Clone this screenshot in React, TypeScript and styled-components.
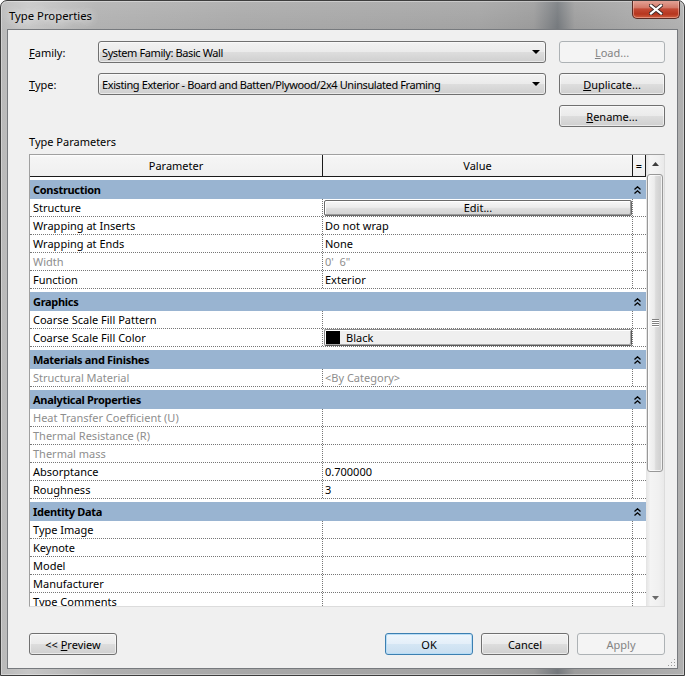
import styled, { createGlobalStyle, css } from 'styled-components'

type PropRowData = {
  label: string
  value?: string
  muted?: boolean
  kind?: 'edit' | 'color'
}

type PropGroup = {
  name: string
  rows: PropRowData[]
}

const GROUPS: PropGroup[] = [
  {
    name: 'Construction',
    rows: [
      { label: 'Structure', kind: 'edit', value: 'Edit...' },
      { label: 'Wrapping at Inserts', value: 'Do not wrap' },
      { label: 'Wrapping at Ends', value: 'None' },
      { label: 'Width', value: "0'  6\"", muted: true },
      { label: 'Function', value: 'Exterior' },
    ],
  },
  {
    name: 'Graphics',
    rows: [
      { label: 'Coarse Scale Fill Pattern' },
      { label: 'Coarse Scale Fill Color', kind: 'color', value: 'Black' },
    ],
  },
  {
    name: 'Materials and Finishes',
    rows: [{ label: 'Structural Material', value: '<By Category>', muted: true }],
  },
  {
    name: 'Analytical Properties',
    rows: [
      { label: 'Heat Transfer Coefficient (U)', muted: true },
      { label: 'Thermal Resistance (R)', muted: true },
      { label: 'Thermal mass', muted: true },
      { label: 'Absorptance', value: '0.700000' },
      { label: 'Roughness', value: '3' },
    ],
  },
  {
    name: 'Identity Data',
    rows: [
      { label: 'Type Image' },
      { label: 'Keynote' },
      { label: 'Model' },
      { label: 'Manufacturer' },
      { label: 'Type Comments' },
    ],
  },
]

const GlobalStyle = createGlobalStyle`
  html, body {
    margin: 0;
    padding: 0;
    background: #ffffff;
  }
  body {
    font-family: 'Noto Sans', 'Open Sans', sans-serif;
    font-size: 11px;
    color: #000;
  }
  * {
    box-sizing: border-box;
  }
`

const COLS = '293px 310px 13px'

const winButtonBg = css`
  border: 1px solid #707070;
  border-radius: 3px;
  background: linear-gradient(#f2f2f2 0%, #ebebeb 48%, #dddddd 52%, #cfcfcf 100%);
  box-shadow: inset 0 0 0 1px rgba(255, 255, 255, 0.55);
`

const Window = styled.div`
  position: relative;
  width: 685px;
  height: 676px;
  border: 1px solid #3d3d3d;
  border-radius: 7px 7px 0 0;
  padding: 0 6px 6px;
  display: flex;
  flex-direction: column;
  overflow: hidden;
  background:
    linear-gradient(to bottom, rgba(255, 255, 255, 0.12), rgba(255, 255, 255, 0) 30px),
    linear-gradient(
      to right,
      #b9b9b9 0%,
      #c6c6c6 4%,
      #b0b0b0 14%,
      #a8a8a8 35%,
      #a2a2a2 70%,
      #9a9a9a 78%,
      #74787c 81.5%,
      #9c9c9c 84%,
      #a6a6a6 92%,
      #b0b0b0 100%
    );
  box-shadow: inset 0 0 0 1px rgba(255, 255, 255, 0.35);
`

const TitleBar = styled.div`
  height: 28px;
  display: flex;
  align-items: flex-start;
  justify-content: space-between;
  padding-left: 2px;
`

const TitleText = styled.span`
  line-height: 30px;
  font-size: 11.3px;
  color: #000;
  text-shadow: 0 0 8px rgba(255, 255, 255, 0.95), 0 0 14px rgba(255, 255, 255, 0.8);
`

const CloseButton = styled.div`
  width: 48px;
  height: 19px;
  margin-top: -1px;
  margin-right: -2px;
  border: 1px solid #5a2b24;
  border-top: none;
  border-radius: 0 0 5px 5px;
  display: flex;
  align-items: center;
  justify-content: center;
  background: linear-gradient(#e5a89c 0%, #d37a69 42%, #c34a35 50%, #b6361f 78%, #cf5f40 100%);
  box-shadow: inset 0 0 0 1px rgba(255, 210, 200, 0.45);
`

const Client = styled.div`
  position: relative;
  flex: 1;
  border: 1px solid #777a7e;
  background: #f0f0f0;
  padding: 11px 12px 13px 21px;
  display: flex;
  flex-direction: column;
`

const FormGrid = styled.div`
  display: grid;
  grid-template-columns: 56px 448px 106px;
  grid-template-rows: 22px 22px 22px;
  column-gap: 13px;
  row-gap: 10px;
  align-items: center;
`

const FieldLabel = styled.label`
  font-size: 11px;
`

const Select = styled.div`
  ${winButtonBg};
  height: 22px;
  display: flex;
  align-items: center;
  justify-content: space-between;
  padding: 0 5px 0 3px;
  white-space: nowrap;
  letter-spacing: -0.4px;
`

const Button = styled.div<{ $disabled?: boolean; $default?: boolean }>`
  ${winButtonBg};
  height: 22px;
  width: 100%;
  display: flex;
  align-items: center;
  justify-content: center;
  font-size: 11px;
  color: #000;
  ${p =>
    p.$disabled &&
    css`
      border-color: #adb2b5;
      background: #f4f4f4;
      box-shadow: none;
      color: #838383;
    `}
  ${p =>
    p.$default &&
    css`
      border-color: #3c7fb1;
      background: linear-gradient(#eef6fc 0%, #e4eff9 48%, #d4e6f4 52%, #c9def0 100%);
      box-shadow: inset 0 0 0 1px #b8ddf6;
    `}
`

const SectionLabel = styled.div`
  margin-top: 7px;
  line-height: 15px;
`

const PropGrid = styled.div`
  margin-top: 5px;
  height: 453px;
  border: 1px solid;
  border-color: #a0a0a0 #dcdcdc #dcdcdc #a0a0a0;
  display: flex;
`

const TableArea = styled.div`
  width: 616px;
  display: flex;
  flex-direction: column;
  background: #ffffff;
`

const HeaderRow = styled.div`
  display: grid;
  grid-template-columns: ${COLS};
  height: 22px;
  border-bottom: 1px solid #1a1a1a;
  background: linear-gradient(#ffffff 0%, #f5f5f5 10%, #efefef 100%);
  flex-shrink: 0;
`

const HeaderCell = styled.div`
  border-right: 1px solid #1a1a1a;
  display: flex;
  align-items: center;
  justify-content: center;
  line-height: 21px;
`

const Body = styled.div`
  flex: 1;
  overflow: hidden;
`

const GroupBar = styled.div`
  margin-top: 3px;
  height: 19px;
  background: #99b4d1;
  display: flex;
  align-items: center;
  justify-content: space-between;
  padding-left: 3px;
  font-weight: 700;
  letter-spacing: -0.3px;
`

const ChevronBox = styled.div`
  width: 13px;
  padding-left: 1px;
  display: flex;
  align-items: center;
`

const PropRow = styled.div`
  display: grid;
  grid-template-columns: ${COLS};
  height: 18px;
  border-bottom: 1px dotted #767676;
`

const ParamCell = styled.div<{ $muted?: boolean }>`
  border-right: 1px dotted #767676;
  padding-left: 3px;
  line-height: 17px;
  white-space: nowrap;
  overflow: hidden;
  color: ${p => (p.$muted ? '#8e8e8e' : '#000')};
`

const ValueCell = styled.div<{ $muted?: boolean; $flush?: boolean }>`
  border-right: 1px dotted #767676;
  padding-left: ${p => (p.$flush ? '1px' : '2px')};
  line-height: 17px;
  white-space: pre;
  overflow: hidden;
  color: ${p => (p.$muted ? '#8e8e8e' : '#000')};
`

const EqCell = styled.div``

const CellButton = styled.div`
  margin-top: 1px;
  height: 16px;
  width: 308px;
  border: 1px solid #6a6a6a;
  border-radius: 2px;
  background: linear-gradient(#f7f7f7 0%, #ececec 45%, #dedede 55%, #d3d3d3 100%);
  box-shadow: inset -1px -1px 0 #9a9a9a, inset 1px 1px 0 #ffffff;
  display: flex;
  align-items: center;
  justify-content: center;
  line-height: 14px;
`

const ColorButton = styled.div`
  height: 17px;
  width: 308px;
  border: 1px solid #8a8a8a;
  border-right-color: #5a5a5a;
  border-bottom-color: #5a5a5a;
  border-radius: 2px;
  background: #efefef;
  box-shadow: inset 1px 1px 0 #ffffff, inset -1px -1px 0 #a8a8a8;
  display: flex;
  align-items: center;
  gap: 6px;
  padding-left: 1px;
  line-height: 15px;
`

const Swatch = styled.span`
  width: 14px;
  height: 13px;
  background: #000;
  flex-shrink: 0;
`

const ScrollBar = styled.div`
  width: 18px;
  display: flex;
  flex-direction: column;
  background: linear-gradient(to right, #e3e3e3 0%, #f4f4f4 25%, #f0f0f0 70%, #e9e9e9 100%);
`

const ScrollArrow = styled.div<{ $h: number }>`
  height: ${p => p.$h}px;
  display: flex;
  align-items: center;
  justify-content: center;
  flex-shrink: 0;
`

const ScrollTrack = styled.div`
  flex: 1;
  padding: 1px 1px 0;
`

const Thumb = styled.div`
  height: 298px;
  border: 1px solid #989898;
  border-radius: 3px;
  background: linear-gradient(to right, #f6f6f6 0%, #ececec 45%, #dcdcdc 55%, #cdcdcd 100%);
  box-shadow: inset 0 0 0 1px rgba(255, 255, 255, 0.7);
  display: flex;
  align-items: center;
  justify-content: center;
`

const Grip = styled.div`
  width: 7px;
  height: 8px;
  background: repeating-linear-gradient(to bottom, #808080 0, #808080 1px, #ffffff 1px, #ffffff 2px);
`

const BottomBar = styled.div`
  margin-top: 26px;
  display: flex;
  justify-content: space-between;
  height: 22px;
`

const ButtonGroup = styled.div`
  display: flex;
  gap: 8px;
`

const DialogButton = styled(Button)`
  width: 88px;
`

const ResizeGrip = styled.svg`
  position: absolute;
  right: 1px;
  bottom: 1px;
`

function Chevron() {
  return (
    <svg width="7" height="8" viewBox="0 0 7 8">
      <polyline points="0.5,3.5 3.5,0.8 6.5,3.5" fill="none" stroke="#000" strokeWidth="1.3" />
      <polyline points="0.5,7.5 3.5,4.8 6.5,7.5" fill="none" stroke="#000" strokeWidth="1.3" />
    </svg>
  )
}

function DropArrow() {
  return (
    <svg width="8" height="4" viewBox="0 0 8 4">
      <polygon points="0,0 8,0 4,4" fill="#000" />
    </svg>
  )
}

function ArrowGlyph({ up, color }: { up?: boolean; color: string }) {
  return (
    <svg width="7" height="4" viewBox="0 0 7 4">
      <polygon points={up ? '0,4 7,4 3.5,0' : '0,0 7,0 3.5,4'} fill={color} />
    </svg>
  )
}

function CloseGlyph() {
  return (
    <svg width="14" height="11" viewBox="0 0 14 11">
      <path d="M2 1.5 L12 9.5 M12 1.5 L2 9.5" stroke="#3d2a28" strokeWidth="4" strokeLinecap="square" />
      <path d="M2 1.5 L12 9.5 M12 1.5 L2 9.5" stroke="#ffffff" strokeWidth="2.2" strokeLinecap="square" />
    </svg>
  )
}

function PropValue({ row }: { row: PropRowData }) {
  if (row.kind === 'edit') {
    return (
      <ValueCell $flush>
        <CellButton>{row.value}</CellButton>
      </ValueCell>
    )
  }
  if (row.kind === 'color') {
    return (
      <ValueCell $flush>
        <ColorButton>
          <Swatch />
          {row.value}
        </ColorButton>
      </ValueCell>
    )
  }
  return <ValueCell $muted={row.muted}>{row.value ?? ''}</ValueCell>
}

export default function App() {
  return (
    <>
      <GlobalStyle />
      <Window>
        <TitleBar>
          <TitleText>Type Properties</TitleText>
          <CloseButton>
            <CloseGlyph />
          </CloseButton>
        </TitleBar>

        <Client>
          <FormGrid>
            <FieldLabel>
              <u>F</u>amily:
            </FieldLabel>
            <Select>
              <span>System Family: Basic Wall</span>
              <DropArrow />
            </Select>
            <Button $disabled>
              <span>
                <u>L</u>oad...
              </span>
            </Button>

            <FieldLabel>
              <u>T</u>ype:
            </FieldLabel>
            <Select>
              <span>Existing Exterior - Board and Batten/Plywood/2x4 Uninsulated Framing</span>
              <DropArrow />
            </Select>
            <Button>
              <span>
                <u>D</u>uplicate...
              </span>
            </Button>

            <span />
            <span />
            <Button>
              <span>
                <u>R</u>ename...
              </span>
            </Button>
          </FormGrid>

          <SectionLabel>Type Parameters</SectionLabel>

          <PropGrid>
            <TableArea>
              <HeaderRow>
                <HeaderCell>Parameter</HeaderCell>
                <HeaderCell>Value</HeaderCell>
                <HeaderCell>=</HeaderCell>
              </HeaderRow>
              <Body>
                {GROUPS.map(group => (
                  <div key={group.name}>
                    <GroupBar>
                      <span>{group.name}</span>
                      <ChevronBox>
                        <Chevron />
                      </ChevronBox>
                    </GroupBar>
                    {group.rows.map(row => (
                      <PropRow key={row.label}>
                        <ParamCell $muted={row.muted}>{row.label}</ParamCell>
                        <PropValue row={row} />
                        <EqCell />
                      </PropRow>
                    ))}
                  </div>
                ))}
              </Body>
            </TableArea>

            <ScrollBar>
              <ScrollArrow $h={18}>
                <ArrowGlyph up color="#3c3c3c" />
              </ScrollArrow>
              <ScrollTrack>
                <Thumb>
                  <Grip />
                </Thumb>
              </ScrollTrack>
              <ScrollArrow $h={17}>
                <ArrowGlyph color="#6a6a6a" />
              </ScrollArrow>
            </ScrollBar>
          </PropGrid>

          <BottomBar>
            <DialogButton>
              <span>
                &lt;&lt; <u>P</u>review
              </span>
            </DialogButton>
            <ButtonGroup>
              <DialogButton $default>OK</DialogButton>
              <DialogButton>Cancel</DialogButton>
              <DialogButton $disabled>Apply</DialogButton>
            </ButtonGroup>
          </BottomBar>

          <ResizeGrip width="10" height="10" viewBox="0 0 10 10">
            {[
              [8, 2],
              [8, 5],
              [5, 5],
              [8, 8],
              [5, 8],
              [2, 8],
            ].map(([x, y]) => (
              <rect key={`${x}-${y}`} x={x} y={y} width="1" height="1" fill="#9a9a9a" />
            ))}
          </ResizeGrip>
        </Client>
      </Window>
    </>
  )
}
